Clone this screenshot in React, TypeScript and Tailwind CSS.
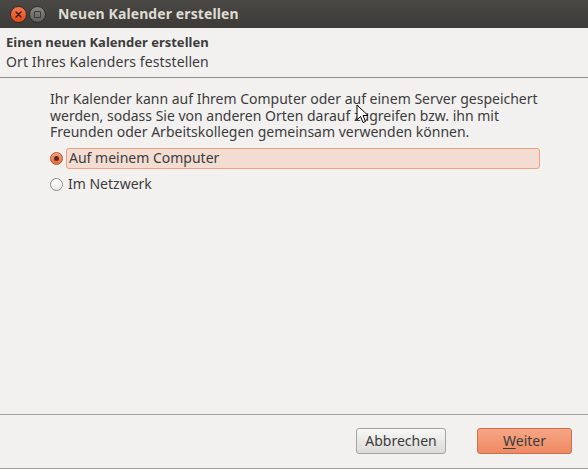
import React from "react";

export default function App() {
  return (
    <div
      className="relative w-[588px] h-[469px] bg-[#f2f1f0] flex flex-col overflow-hidden text-[#3c3c3c]"
      style={{ fontFamily: '"Noto Sans", "DejaVu Sans", sans-serif' }}
    >
      {/* Title bar */}
      <div className="h-[28px] shrink-0 flex items-center bg-gradient-to-b from-[#4a4945] to-[#3c3b37] pl-[10px]">
        <div className="w-[17px] h-[17px] rounded-full bg-gradient-to-b from-[#f6784a] to-[#de4a18] border border-[#3a2a22] flex items-center justify-center">
          <svg width="7" height="7" viewBox="0 0 7 7">
            <path d="M1 1 L6 6 M6 1 L1 6" stroke="#3b1a0e" strokeWidth="1.4" strokeLinecap="round" />
          </svg>
        </div>
        <div className="ml-[2px] w-[17px] h-[17px] rounded-full bg-gradient-to-b from-[#8a8985] to-[#5f5e5a] border border-[#2e2d2a] flex items-center justify-center">
          <div className="w-[7px] h-[7px] border border-[#3a3936] rounded-[1px]" />
        </div>
        <div className="ml-[12px] text-[14px] font-bold text-[#dfdbd2] leading-none tracking-[0.1px]">
          Neuen Kalender erstellen
        </div>
      </div>

      {/* Header */}
      <div className="h-[50px] shrink-0 px-[6px] pt-[4px] border-b border-[#8f8e8b]">
        <div className="text-[13px] font-bold leading-[20px] text-[#3c3c3c]">Einen neuen Kalender erstellen</div>
        <div className="text-[14px] leading-[19px] text-[#3c3c3c] tracking-[0.1px]">Ort Ihres Kalenders feststellen</div>
      </div>

      {/* Content */}
      <div className="flex-1 pl-[50px] pr-[48px] pt-[13px] text-[14px]">
        <p className="leading-[16.5px] text-[#3c3c3c] whitespace-nowrap">
          Ihr Kalender kann auf Ihrem Computer oder auf einem Server gespeichert
          <br />
          werden, sodass Sie von anderen Orten darauf zugreifen bzw. ihn mit
          <br />
          Freunden oder Arbeitskollegen gemeinsam verwenden können.
        </p>
        <div className="mt-[7px] flex items-center h-[21px]">
          <div className="w-[13px] h-[13px] rounded-full bg-gradient-to-b from-[#f5a080] to-[#e66a3c] border border-[#c0532a] flex items-center justify-center shrink-0">
            <div className="w-[5px] h-[5px] rounded-full bg-[#5a2a18]" />
          </div>
          <div className="ml-[3px] flex-1 h-[21px] bg-[#f3dcd2] border border-[#f0a07e] rounded-[3px] flex items-center pl-[2px] leading-none">
            Auf meinem Computer
          </div>
        </div>
        <div className="mt-[5px] flex items-center h-[21px]">
          <div className="w-[13px] h-[13px] rounded-full bg-gradient-to-b from-[#ffffff] to-[#ecebea] border border-[#8e8d8a] shrink-0" />
          <div className="ml-[5px] leading-none">Im Netzwerk</div>
        </div>
      </div>

      {/* Footer */}
      <div className="h-[55px] shrink-0 border-t border-[#a09f9c] border-b flex items-center justify-end pr-[16px] pb-[1px]">
        <button className="w-[90px] h-[26px] rounded-[3px] border border-[#a5a4a1] bg-gradient-to-b from-[#f7f7f6] to-[#dcdbd9] text-[14px] text-[#3c3c3c] leading-none">
          Abbrechen
        </button>
        <button className="ml-[31px] w-[95px] h-[26px] rounded-[3px] border border-[#c9704e] bg-gradient-to-b from-[#f7a584] to-[#ee8a63] text-[14px] text-[#3c3c3c] leading-none">
          <span className="underline underline-offset-2">W</span>eiter
        </button>
      </div>

      {/* Mouse cursor */}
      <svg className="absolute left-[356px] top-[104px]" width="13" height="20" viewBox="0 0 13 20">
        <path d="M1 1 L1 16 L4.5 12.5 L7 18.5 L9.5 17.5 L7 11.5 L12 11.5 Z" fill="#ffffff" stroke="#000000" strokeWidth="1" strokeLinejoin="round" />
      </svg>
    </div>
  );
}
